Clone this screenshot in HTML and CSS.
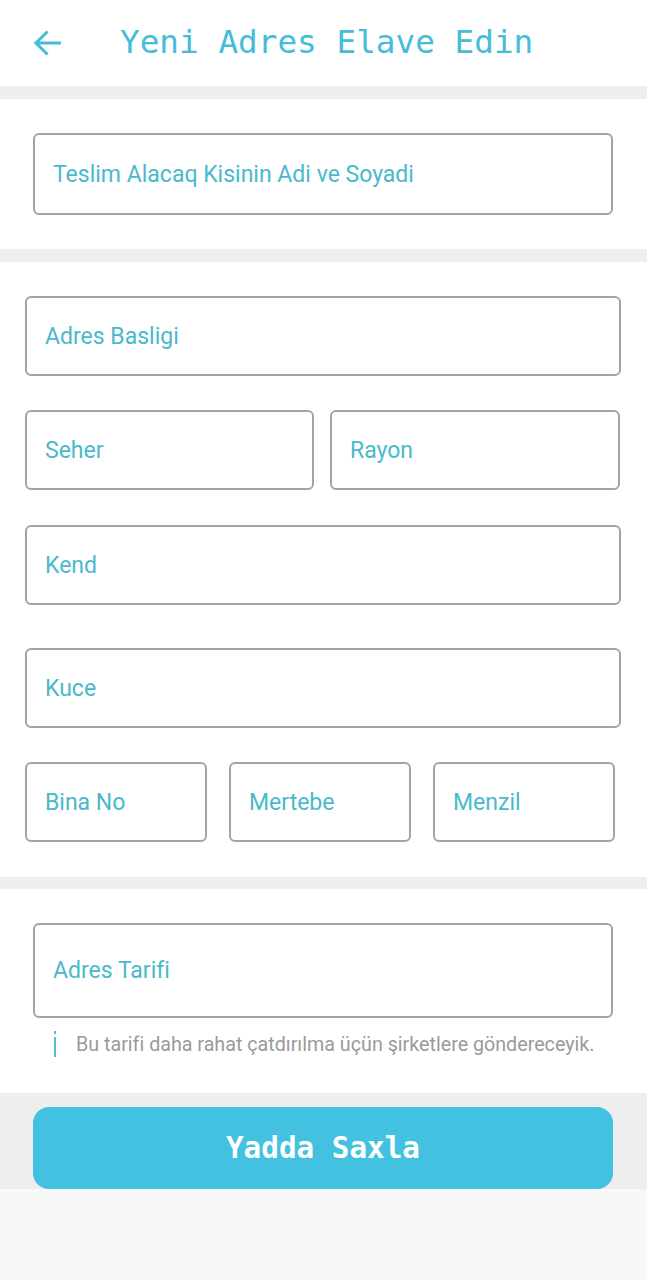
FILE: index.html
```html
<!DOCTYPE html>
<html lang="az">
<head>
<meta charset="utf-8">
<title>Yeni Adres Elave Edin</title>
<link rel="stylesheet" href="styles.css">
</head>
<body>
<header class="topbar">
  <svg class="back" viewBox="0 0 28 26" width="28" height="26" aria-hidden="true">
    <path d="M27 13H3M13.5 2.5L3 13l10.5 10.5" fill="none" stroke="#45bcd8" stroke-width="3" stroke-linecap="square"/>
  </svg>
  <h1 class="title">Yeni Adres Elave Edin</h1>
</header>
<main class="page">
  <section class="card card-name">
    <div class="field field-tall"><span class="label">Teslim Alacaq Kisinin Adi ve Soyadi</span></div>
  </section>
  <section class="card card-address">
    <div class="field"><span class="label">Adres Basligi</span></div>
    <div class="row row-2">
      <div class="field"><span class="label">Seher</span></div>
      <div class="field"><span class="label">Rayon</span></div>
    </div>
    <div class="field field-kend"><span class="label">Kend</span></div>
    <div class="field field-kuce"><span class="label">Kuce</span></div>
    <div class="row row-3">
      <div class="field"><span class="label">Bina No</span></div>
      <div class="field"><span class="label">Mertebe</span></div>
      <div class="field"><span class="label">Menzil</span></div>
    </div>
  </section>
  <section class="card card-desc">
    <div class="field field-desc"><span class="label">Adres Tarifi</span></div>
    <p class="hint">
      <svg class="hint-icon" viewBox="0 0 4 26" width="4" height="26" aria-hidden="true">
        <rect x="1" y="0" width="2" height="3" fill="#5bbcd6"/>
        <rect x="1" y="6" width="2" height="20" fill="#5bbcd6"/>
      </svg>
      <span>Bu tarifi daha rahat çatdırılma üçün şirketlere göndereceyik.</span>
    </p>
  </section>
  <div class="actions">
    <button class="save" type="button">Yadda Saxla</button>
  </div>
</main>
</body>
</html>
```
FILE: styles.css
```css
* { box-sizing: border-box; }
html, body { margin: 0; padding: 0; }
body {
  background: #f8f8f8;
  font-family: Roboto, "Noto Sans", "Liberation Sans", sans-serif;
  width: 647px;
  min-height: 1280px;
}
.topbar {
  height: 86px;
  background: #fff;
  display: flex;
  align-items: center;
  padding-left: 33px;
}
.back { display: block; margin-top: 0; }
.title {
  margin: 0 0 0 59px;
  font-family: "DejaVu Sans Mono", "Liberation Mono", monospace;
  font-weight: normal;
  font-size: 32.7px;
  color: #45bcd8;
  line-height: 1;
  position: relative;
  top: -1px;
}
.page {
  background: #eeeeee;
  padding-top: 13px;
  display: flex;
  flex-direction: column;
}
.card {
  background: #fff;
  display: flex;
  flex-direction: column;
}
.card-name { padding: 34px 34px 34px 33px; }
.card-address {
  margin-top: 13px;
  padding: 34px 26px 35px 25px;
  gap: 34px;
}
.card-desc {
  margin-top: 12px;
  padding: 34px 34px 0 33px;
  height: 204px;
}
.field {
  height: 80px;
  border: 2px solid #a4a4a4;
  border-radius: 6px;
  display: flex;
  align-items: center;
  padding-left: 18px;
  background: #fff;
}
.field-tall { height: 82px; }
.field-desc { height: 95px; }
.field-kend { margin-top: 1px; }
.field-kuce { margin-top: 9px; }
.label {
  color: #4ab9cc;
  font-size: 23px;
  line-height: 1;
}
.row { display: grid; }
.row-2 { grid-template-columns: 289px 290px; column-gap: 16px; }
.row-3 { grid-template-columns: 182px 182px 182px; column-gap: 22px; }
.hint {
  margin: 13px 0 0 20px;
  display: flex;
  align-items: center;
  gap: 19px;
  color: #9a9a9a;
  font-size: 19.7px;
}
.hint-icon { display: block; }
.actions {
  padding: 14px 34px 0 33px;
  background: #eeeeee;
}
.save {
  display: block;
  width: 580px;
  height: 82px;
  border: 0;
  border-radius: 16px;
  background: #42c2e0;
  color: #fff;
  font-family: "DejaVu Sans Mono", "Liberation Mono", monospace;
  font-weight: bold;
  font-size: 29.3px;
}
```
